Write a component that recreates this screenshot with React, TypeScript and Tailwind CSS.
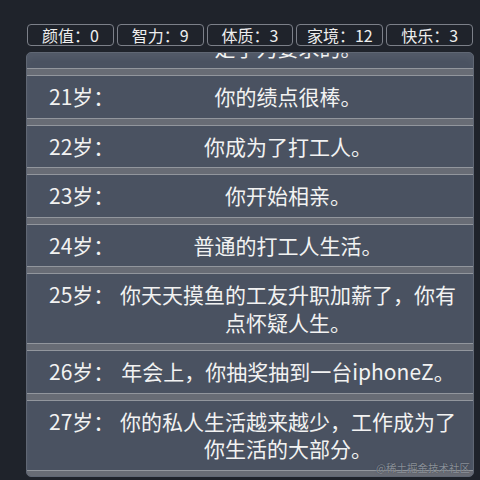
import React from "react";

const stats = [
  ["颜值", "0"],
  ["智力", "9"],
  ["体质", "3"],
  ["家境", "12"],
  ["快乐", "3"],
];

const rows: [string, string][] = [
  ["20岁：", "你研究生毕业了，找工作的标准也被定了为要求的。"],
  ["21岁：", "你的绩点很棒。"],
  ["22岁：", "你成为了打工人。"],
  ["23岁：", "你开始相亲。"],
  ["24岁：", "普通的打工人生活。"],
  ["25岁：", "你天天摸鱼的工友升职加薪了，你有点怀疑人生。"],
  ["26岁：", "年会上，你抽奖抽到一台iphoneZ。"],
  ["27岁：", "你的私人生活越来越少，工作成为了你生活的大部分。"],
];

export default function App() {
  return (
    <div
      className="w-[480px] h-[480px] bg-[#1f232b] pt-[24px] pl-[26px] pr-[6px] overflow-hidden"
      style={{ fontFamily: '"Noto Sans CJK SC", "Microsoft YaHei", sans-serif' }}
    >
      <div className="flex gap-[3px] h-[22px] pl-[1px] pr-[1px]">
        {stats.map(([k, v]) => (
          <div
            key={k}
            className="flex-1 border border-[#7c8089] rounded-[4px] flex items-center justify-center text-[16px] leading-none text-[#eeeeee]"
          >
            {k}：{v}
          </div>
        ))}
      </div>
      <div className="relative mt-[6px] h-[425px] border border-[#606774] rounded-[5px] bg-[#4a5261] overflow-hidden shadow-[inset_0_5px_6px_rgba(255,255,255,0.05)]">
        <div className="mt-[-54px]">
          {rows.map(([age, text]) => (
            <div key={age}>
              <div className="flex items-start py-[7px] pl-[22px] text-[21px] leading-[27.5px] text-[#f2f2f2]">
                <div className="w-[70px] shrink-0 whitespace-nowrap">{age}</div>
                <div className="w-[338px] shrink-0 text-center">{text}</div>
              </div>
              <div className="h-[8px] border-t-[1.5px] border-b-[1.5px] border-[#92969d] bg-[#686c75]" />
            </div>
          ))}
        </div>
        <div className="absolute right-[3px] bottom-[3px] text-[10.5px] leading-none text-[#9aa0a8] opacity-80 [text-shadow:0_0_1px_#2a2e36]">
          @稀土掘金技术社区
        </div>
      </div>
    </div>
  );
}
